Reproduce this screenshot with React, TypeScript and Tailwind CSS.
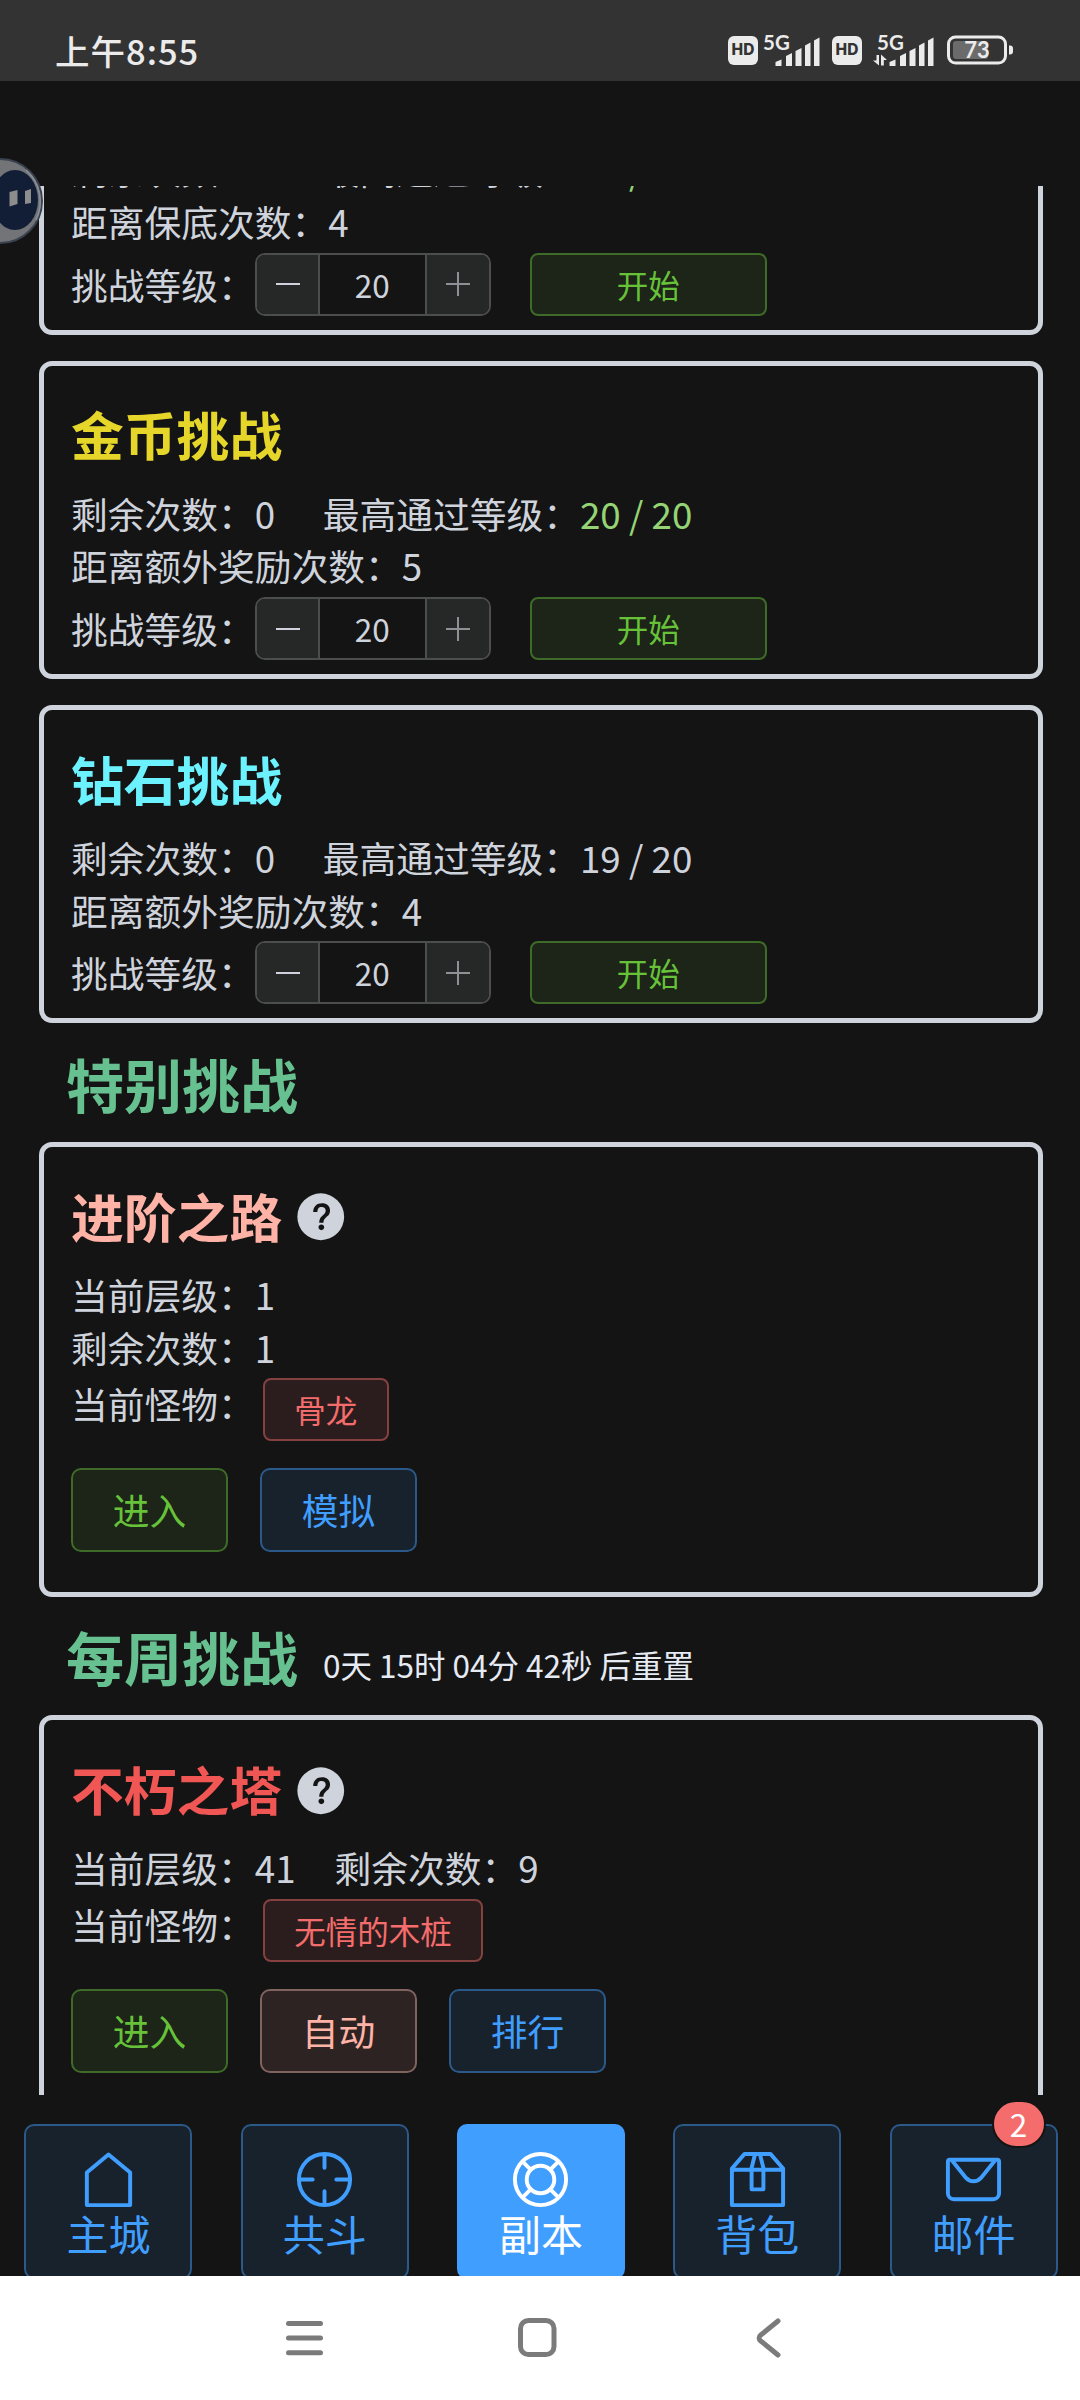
import type { ReactNode } from 'react'

const COLORS = {
  success: 'border-[#3e6b27] bg-[#1c2518] text-[#67c23a]',
  primary: 'border-[#2a598a] bg-[#18222c] text-[#409eff]',
  danger: 'border-[#854040] bg-[#2b1d1d] text-[#f56c6c]',
  salmon: 'border-[#80635e] bg-[#2c2322] text-[#ffb3a7]',
}

type Tone = keyof typeof COLORS

function HdBadge() {
  return (
    <div className="flex h-[29px] w-[30px] items-center justify-center rounded-[6px] bg-[#ebebeb] font-['Inter',sans-serif] text-[15.5px] font-extrabold leading-none text-[#333]">
      HD
    </div>
  )
}

function Signal({ data }: { data?: boolean }) {
  return (
    <svg className="overflow-visible" width="62" height="34" viewBox="0 0 62 34" fill="#ebebeb">
      <text x="5" y="16.5" fontFamily="Lato, sans-serif" fontSize="20.5" fontWeight="700">
        5G
      </text>
      <path d="M17.500 33v-4l6-2.500v6.500zM28 33v-10l6-3v13zM37.500 33v-15l6-3v18zM47 33v-20.500l5.500-3v23.500zM56 33v-25.500l5.500-3v28.500z" />
      {data && <path d="M4.500 22h2.500v10.500l-6-5h3.500zM9 21.500l6 5.500h-3.200v5.500h-2.800z" />}
    </svg>
  )
}

function StatusBar() {
  return (
    <div className="flex h-[81px] shrink-0 items-center bg-[#333] pl-[55px] pr-[66px] pt-[19px]">
      <div className="text-[34.5px] font-medium leading-none tracking-[1px] text-[#ebebeb]">上午8:55</div>
      <div className="ml-auto flex items-center">
        <HdBadge />
        <Signal />
        <div className="ml-[12px]">
          <HdBadge />
        </div>
        <div className="ml-[10px]">
          <Signal data />
        </div>
        <svg className="ml-[12px]" width="68" height="30" viewBox="0 0 68 30">
          <rect x="2.500" y="2" width="57" height="26" rx="7" fill="none" stroke="#ebebeb" strokeWidth="3" />
          <rect x="7" y="6" width="35" height="18" rx="3" fill="#6b6b6b" />
          <path d="M63 10.500h1a3 3 0 0 1 3 3v3a3 3 0 0 1-3 3h-1z" fill="#ebebeb" />
          <text x="31" y="23" textAnchor="middle" fontFamily="Lato, sans-serif" fontSize="22" fontWeight="700" fill="#ebebeb">
            73
          </text>
        </svg>
      </div>
    </div>
  )
}

function Card({ children }: { children: ReactNode }) {
  return (
    <div className="shrink-0 rounded-[13px] border-[5px] border-[#cfd3dc] px-[27px] pt-[42px]">{children}</div>
  )
}

function Title({ color = '', help, children }: { color?: string; help?: boolean; children?: ReactNode }) {
  return (
    <div className={`flex h-[52.5px] items-center text-[52.8px] font-bold leading-none ${color}`}>
      {children}
      {help && (
        <svg className="ml-[12px] mt-[4px] size-[53.500px] text-[#cfd3dc]" viewBox="0 0 1024 1024" fill="currentColor">
          <path d="M512 64a448 448 0 1 1 0 896 448 448 0 0 1 0-896zm23.744 191.488c-52.096 0-92.928 14.784-123.2 44.352-30.976 29.568-45.760 70.400-45.760 122.496h80.256c0-29.568 5.632-52.800 17.600-68.992 13.376-19.712 35.200-28.864 66.176-28.864 23.936 0 42.944 6.336 56.320 19.712 12.672 13.376 19.712 31.680 19.712 54.912 0 17.600-6.336 34.496-19.008 49.984l-8.448 9.856c-45.760 40.832-73.216 70.400-82.368 89.408-9.856 19.008-14.080 42.240-14.080 68.992v9.856h80.960v-9.856c0-16.896 3.520-31.680 10.560-45.760 6.336-12.672 15.488-24.640 28.160-35.200 33.792-29.568 54.208-48.576 60.544-55.616 16.896-22.528 26.048-51.392 26.048-86.592 0-42.944-14.080-76.736-42.240-101.376-28.160-25.344-65.472-37.312-111.232-37.312zm-12.672 406.208a54.272 54.272 0 0 0-38.720 14.784 49.408 49.408 0 0 0-15.488 38.016c0 15.488 4.928 28.160 15.488 38.016A54.848 54.848 0 0 0 523.072 768c15.488 0 28.160-4.928 38.720-14.784a51.520 51.520 0 0 0 16.192-38.720 51.968 51.968 0 0 0-15.488-38.016 55.936 55.936 0 0 0-39.424-14.784z" />
        </svg>
      )}
    </div>
  )
}

function Row({ children }: { children: ReactNode }) {
  return <div className="flex h-[52.5px] items-center whitespace-pre">{children}</div>
}

function Stepper({ value }: { value: number }) {
  return (
    <div className="flex h-[63px] w-[236px] overflow-hidden rounded-[10px] border-2 border-[#4c4d4f]">
      <div className="flex w-[63px] items-center justify-center border-r-2 border-[#4c4d4f] bg-[#262727] pl-px">
        <div className="h-[2px] w-[24px] bg-[#cfd3dc]" />
      </div>
      <div className="flex flex-1 items-center justify-center text-[31.5px]">{value}</div>
      <div className="flex w-[64px] items-center justify-center border-l-2 border-[#4c4d4f] bg-[#262727]">
        <svg width="24" height="24" stroke="#8d9095" strokeWidth="2">
          <path d="M0 12h24M12 0v24" />
        </svg>
      </div>
    </div>
  )
}

function Button({ tone, children }: { tone: Tone; children: ReactNode }) {
  return (
    <div className={`flex h-[84px] w-[157px] items-center justify-center rounded-[10px] border-2 ${COLORS[tone]}`}>
      {children}
    </div>
  )
}

type ChallengeProps = {
  title?: string
  color?: string
  label: string
  count: number
  best: string
  bestColor?: string
}

function ChallengeCard({ title, color, label, count, best, bestColor = '' }: ChallengeProps) {
  return (
    <Card>
      <Title color={color}>{title}</Title>
      <div className="mt-[27px]">
        <Row>
          <span>剩余次数：0</span>
          <span className="ml-[47.5px]">最高通过等级：</span>
          <span className={bestColor}>{best}</span>
        </Row>
        <Row>
          {label}：{count}
        </Row>
      </div>
      <div className="mb-[14px] mt-[5px] flex h-[63px] items-center">
        <span>挑战等级：</span>
        <Stepper value={20} />
        <div
          className={`ml-[39px] flex h-[63px] w-[237px] items-center justify-center rounded-[8px] border-2 text-[31.5px] ${COLORS.success}`}
        >
          开始
        </div>
      </div>
    </Card>
  )
}

function Monster({ name }: { name: string }) {
  return (
    <div className="mt-[5px] flex h-[63px] items-start">
      <span className="leading-[50px]">当前怪物：</span>
      <div
        className={`ml-[8px] flex h-[63px] items-center rounded-[8px] border-2 px-[29.5px] text-[31.5px] ${COLORS.danger}`}
      >
        {name}
      </div>
    </div>
  )
}

function Section({ title, children }: { title: string; children?: ReactNode }) {
  return (
    <div className="flex h-[118.5px] shrink-0 items-center pl-[27px]">
      <div className="flex items-baseline gap-[25px]">
        <h2 className="text-[58px] font-bold leading-none text-[#67c08f]">{title}</h2>
        {children}
      </div>
    </div>
  )
}

const NAV = [
  {
    label: '主城',
    icon: <path d="M160 399 512 106l352 293v529H160z" />,
  },
  {
    label: '共斗',
    icon: (
      <>
        <circle cx="512" cy="512" r="416" />
        <path d="M512 128v192M512 704v192M128 512h192M704 512h192" strokeLinecap="round" />
      </>
    ),
  },
  {
    label: '副本',
    active: true,
    icon: (
      <>
        <circle cx="512" cy="512" r="416" />
        <circle cx="512" cy="512" r="224" />
        <path d="M348 348 230 230M676 348l118-118M348 676 230 794M676 676l118 118" />
      </>
    ),
  },
  {
    label: '背包',
    icon: (
      <>
        <path d="M302 96h420l206 236v596H96V332zM64 352h896" />
        <path d="M473 96h78l57 228v348H416V324z" />
      </>
    ),
  },
  {
    label: '邮件',
    badge: 2,
    icon: (
      <>
        <path d="M128 192h768a32 32 0 0 1 32 32v512a96 96 0 0 1-96 96H192a96 96 0 0 1-96-96V224a32 32 0 0 1 32-32z" />
        <path d="m163 203 228 283a160 160 0 0 0 242 0l228-283" />
      </>
    ),
  },
]

function TabBar() {
  return (
    <div className="flex h-[181px] shrink-0 justify-between overflow-hidden pl-[24.4px] pr-[22.4px] pt-[29px]">
      {NAV.map((item) => (
        <div
          key={item.label}
          className={`relative flex h-[155px] w-[168px] flex-col items-center rounded-[10px] border-2 pt-[22px] text-[42px] ${
            item.active ? 'border-[#409eff] bg-[#409eff] text-white' : COLORS.primary
          }`}
        >
          <svg
            className="size-[63px] shrink-0"
            viewBox="0 0 1024 1024"
            fill="none"
            stroke="currentColor"
            strokeWidth="64"
            strokeLinejoin="round"
          >
            {item.icon}
          </svg>
          <span className="leading-[44px]">{item.label}</span>
          {item.badge && (
            <div className="absolute right-[10px] top-[-26px] flex h-[48px] w-[54px] items-center justify-center rounded-full border-2 border-[#141414] bg-[#f56c6c] text-[31.5px] leading-none text-white">
              {item.badge}
            </div>
          )}
        </div>
      ))}
    </div>
  )
}

function SystemNav() {
  return (
    <div className="flex h-[124px] shrink-0 items-center bg-white pl-[284px]">
      <svg width="500" height="44" viewBox="0 0 500 44" fill="none" stroke="#7b7b7b" strokeWidth="5" strokeLinecap="round">
        <path d="M4.500 7.500h32M4.500 22h32M4.500 36.700h32" />
        <rect x="236.500" y="4.500" width="33.500" height="34" rx="8" />
        <path d="m494 5-17.500 14.200a3.500 3.500 0 0 0 0 5.600L494 39" />
      </svg>
    </div>
  )
}

function FloatingBall() {
  return (
    <svg className="absolute left-0 top-[155px]" width="48" height="92" viewBox="0 0 48 92">
      <circle cx="0" cy="46" r="42" fill="#737478" stroke="#3b4350" strokeWidth="2" />
      <ellipse cx="15" cy="45" rx="23" ry="30" fill="#121e35" />
      <path d="M26 15a42 42 0 0 1 10 50" fill="none" stroke="#8b919c" strokeWidth="1.500" />
      <path d="m9.500 37 8-2v14l-8 2.500zM25 36l6-2v14l-6 1z" fill="#8d8d8d" />
    </svg>
  )
}

export default function App() {
  return (
    <div className="relative flex h-[2400px] w-[1080px] flex-col overflow-hidden bg-[#141414] font-['Noto_Sans_CJK_SC',sans-serif] text-[36.75px] text-[#cfd3dc]">
      <StatusBar />
      <div className="mt-[105px] h-[1909px] shrink-0 overflow-hidden">
        <div className="-mt-[169.7px] flex flex-col pl-[39px] pr-[37px]">
          <div className="flex flex-col gap-[25.8px]">
            <ChallengeCard label="距离保底次数" count={4} best="20 / 20" bestColor="text-[#95d475]" />
            <ChallengeCard
              title="金币挑战"
              color="text-[#e6d62a]"
              label="距离额外奖励次数"
              count={5}
              best="20 / 20"
              bestColor="text-[#95d475]"
            />
            <ChallengeCard title="钻石挑战" color="text-[#6cf2ff]" label="距离额外奖励次数" count={4} best="19 / 20" />
          </div>

          <Section title="特别挑战" />
          <Card>
            <Title color="text-[#ffb3a7]" help>
              进阶之路
            </Title>
            <div className="mt-[27px]">
              <Row>当前层级：1</Row>
              <Row>剩余次数：1</Row>
            </div>
            <Monster name="骨龙" />
            <div className="mb-[40px] mt-[26.3px] flex gap-[32px]">
              <Button tone="success">进入</Button>
              <Button tone="primary">模拟</Button>
            </div>
          </Card>

          <Section title="每周挑战">
            <span className="relative top-[-3px] text-[31.5px] leading-none text-[#e5eaf3]">
              0天 15时 04分 42秒 后重置
            </span>
          </Section>
          <Card>
            <Title color="text-[#f05654]" help>
              不朽之塔
            </Title>
            <div className="mt-[27px]">
              <Row>
                <span>当前层级：41</span>
                <span className="ml-[39px]">剩余次数：9</span>
              </Row>
            </div>
            <Monster name="无情的木桩" />
            <div className="mb-[40px] mt-[26.3px] flex gap-[32px]">
              <Button tone="success">进入</Button>
              <Button tone="salmon">自动</Button>
              <Button tone="primary">排行</Button>
            </div>
          </Card>
        </div>
      </div>
      <TabBar />
      <SystemNav />
      <FloatingBall />
    </div>
  )
}
